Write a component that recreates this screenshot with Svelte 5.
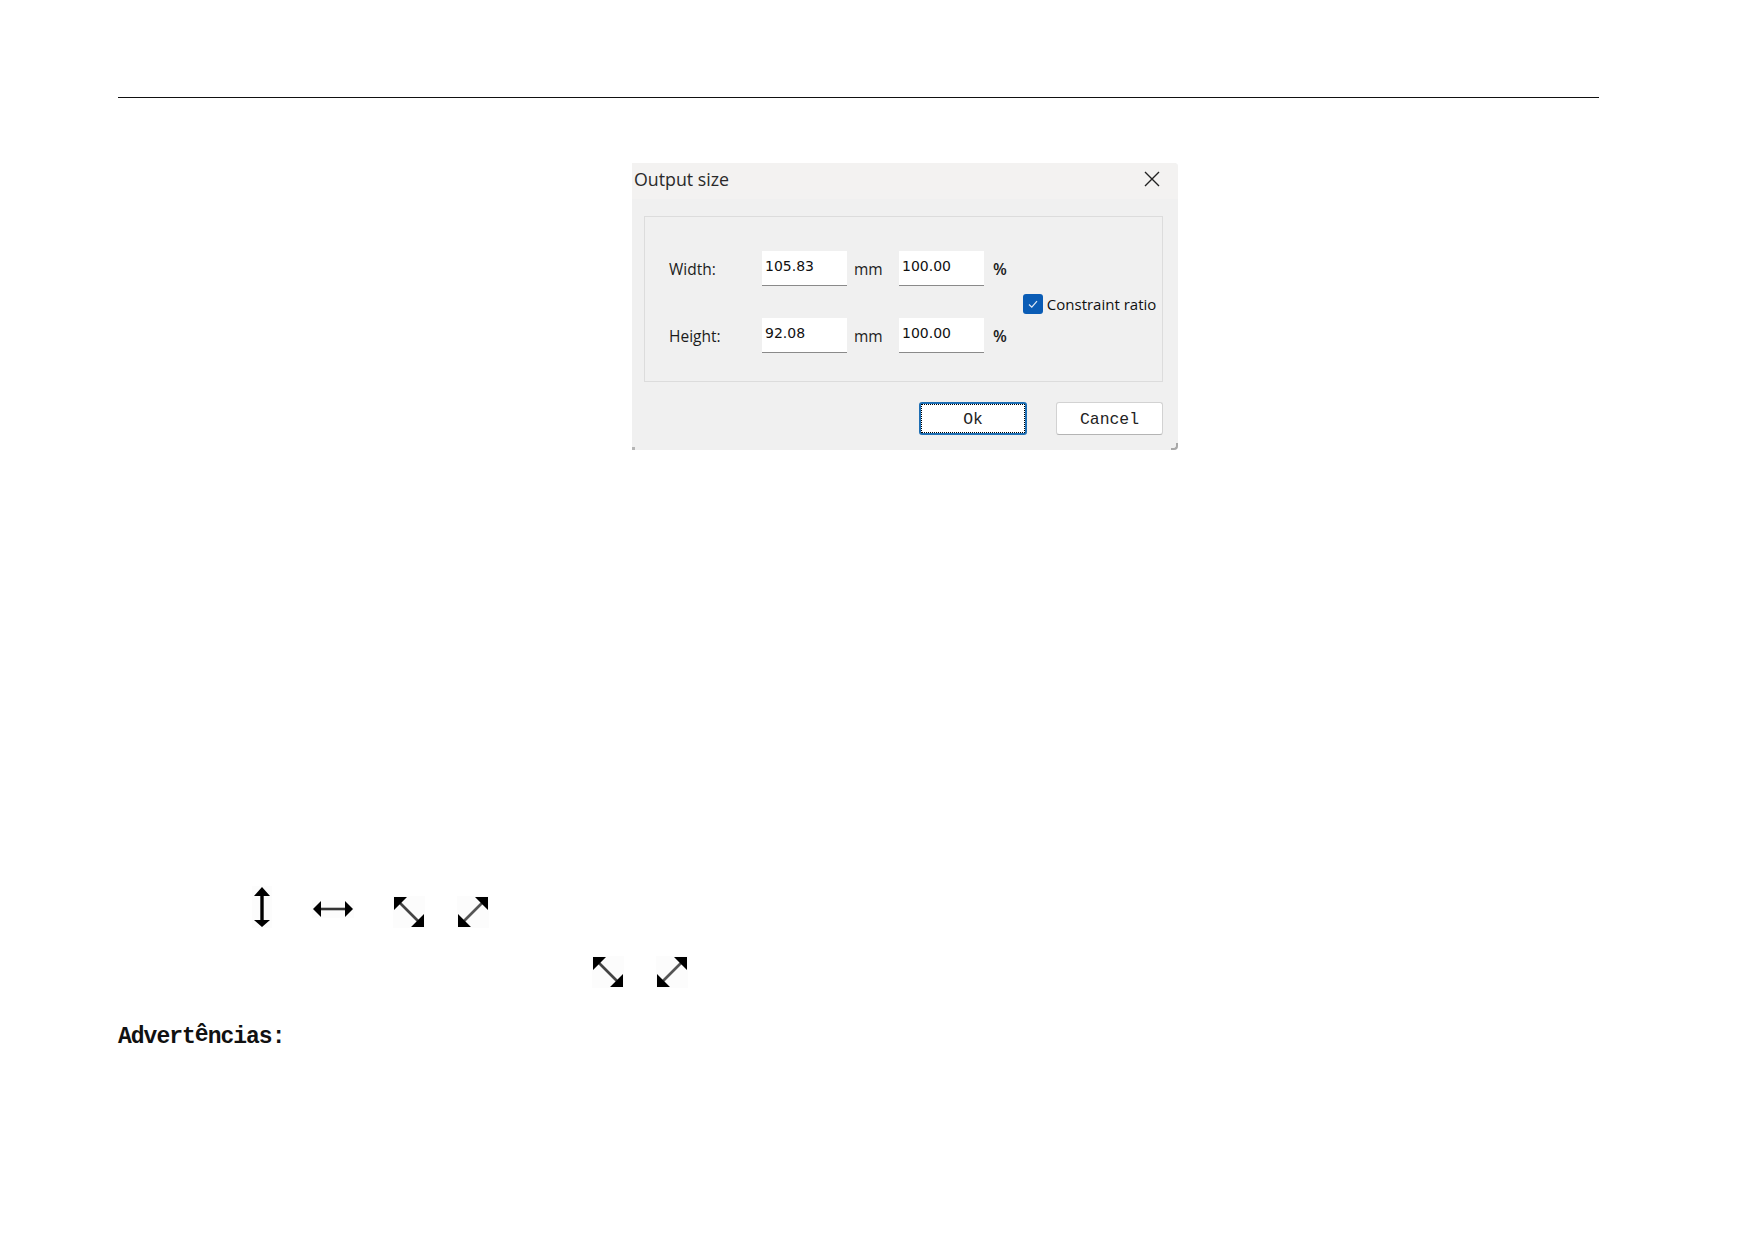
<script lang="ts">
  // Output size dialog plus the resize cursors shown under it
  const rows = [
    { label: 'Width:', mm: '105.83', pct: '100.00' },
    { label: 'Height:', mm: '92.08', pct: '100.00' }
  ];
</script>

{#snippet vert()}
  <svg class="cursor" width="20" height="42" viewBox="0 0 20 42">
    <path d="M10 4v34" stroke="#000" stroke-width="3.4" fill="none"/>
    <path d="M10 1l8 9H2zM10 41l8-7H2z" fill="#000"/>
  </svg>
{/snippet}

{#snippet horiz()}
  <svg class="cursor" width="42" height="18" viewBox="0 0 42 18">
    <path d="M5 9h32" stroke="#333" stroke-width="2.6" fill="none"/>
    <path d="M1 9l8-8v16zM41 9l-8-8v16z" fill="#000"/>
  </svg>
{/snippet}

{#snippet nwse()}
  <svg class="cursor" width="32" height="32" viewBox="0 0 32 32">
    <path d="M6 6l20 20" stroke="#444" stroke-width="2.6" fill="none"/>
    <path d="M1 1h13L1 14zM31 31H18l13-13z" fill="#000"/>
  </svg>
{/snippet}

{#snippet nesw()}
  <svg class="cursor" width="32" height="32" viewBox="0 0 32 32">
    <path d="M26 6L6 26" stroke="#555" stroke-width="2.6" fill="none"/>
    <path d="M31 1H18l13 13zM1 31h13L1 18z" fill="#000"/>
  </svg>
{/snippet}

<div class="page">
  <hr class="rule" />

  <section class="dialog">
    <header class="titlebar">
      <span class="title">Output size</span>
      <svg class="close" width="16" height="16" viewBox="0 0 16 16">
        <path d="M1 1l14 14M15 1L1 15" stroke="#222" stroke-width="1.4" fill="none"/>
      </svg>
    </header>

    <div class="panel">
      <div class="fields">
        {#each rows as row}
          <div class="row">
            <span class="label">{row.label}</span>
            <span class="input">{row.mm}</span>
            <span class="unit mm">mm</span>
            <span class="input">{row.pct}</span>
            <span class="unit pct">%</span>
          </div>
        {/each}
      </div>
      <div class="constraint">
        <span class="check">
          <svg width="12" height="12" viewBox="0 0 12 12">
            <path d="M2 6.5l2.8 2.6L10 3.2" stroke="#dfeaf6" stroke-width="1.2" fill="none"/>
          </svg>
        </span>
        <span class="constraint-label">Constraint ratio</span>
      </div>
    </div>

    <div class="actions">
      <button class="btn primary"><span class="focus">Ok</span></button>
      <button class="btn">Cancel</button>
    </div>
  </section>

  <div class="cursors first">
    <span class="slot">{@render vert()}</span>
    <span class="slot h">{@render horiz()}</span>
    <span class="slot d1">{@render nwse()}</span>
    <span class="slot d2">{@render nesw()}</span>
  </div>
  <div class="cursors second">
    {@render nwse()}
    {@render nesw()}
  </div>

  <h2 class="warn">Advert<span class="accent">ê</span>ncias:</h2>
</div>

<style>
  :global(body) {
    margin: 0;
    background: #fff;
  }

  .page {
    box-sizing: border-box;
    width: 1754px;
    height: 1240px;
    padding: 97px 155px 0 118px;
    overflow: hidden;
  }

  .rule {
    margin: 0;
    border: none;
    border-top: 1px solid #111;
  }

  .dialog {
    box-sizing: border-box;
    position: relative;
    width: 546px;
    height: 287px;
    margin: 65px 0 0 514px;
    background: #f0f0f0;
    border-radius: 0 4px 4px 0;
    font-family: "Open Sans", sans-serif;
    color: #222;
  }

  /* the grey nicks left on the window corners */
  .dialog::before,
  .dialog::after {
    content: "";
    position: absolute;
    bottom: 0;
    width: 5px;
    height: 5px;
  }

  .dialog::before {
    left: 0;
    width: 3px;
    height: 3px;
    background: #b5b5b5;
  }

  .dialog::after {
    right: 0;
    border-right: 2px solid #a8a8a8;
    border-bottom: 2px solid #a8a8a8;
    border-bottom-right-radius: 4px;
  }

  .titlebar {
    display: flex;
    align-items: center;
    justify-content: space-between;
    height: 36px;
    padding: 0 18px 5px 2px;
    box-sizing: border-box;
    background: #f3f2f1;
    border-top-right-radius: 4px;
  }

  .title {
    font-size: 17.8px;
    color: #2a2a2a;
  }

  .panel {
    box-sizing: border-box;
    display: flex;
    margin: 17px 15px 0 12px;
    height: 166px;
    border: 1px solid #dcdcdc;
    padding: 34px 0 0 24px;
  }

  .fields {
    display: flex;
    flex-direction: column;
    gap: 32px;
  }

  .row {
    display: flex;
    align-items: center;
    height: 35px;
  }

  .label {
    width: 93px;
    font-size: 15.5px;
    color: #1c1c1c;
  }

  .input {
    box-sizing: border-box;
    width: 85px;
    height: 35px;
    padding: 6px 0 0 3px;
    background: #fff;
    border-bottom: 1px solid #8a8a8a;
    font: 14px/18px "DejaVu Sans", sans-serif;
    color: #111;
  }

  .unit {
    font-size: 15.5px;
    color: #1c1c1c;
  }

  .mm {
    box-sizing: border-box;
    width: 52px;
    padding-left: 7px;
  }

  .pct {
    padding-left: 9px;
    font-size: 16px;
    font-weight: 600;
  }

  .constraint {
    display: flex;
    align-items: center;
    gap: 4px;
    margin: 43px 0 0 16px;
    height: 20px;
    white-space: nowrap;
  }

  .check {
    display: flex;
    align-items: center;
    justify-content: center;
    width: 20px;
    height: 20px;
    border-radius: 3px;
    background: #0a5cb5;
  }

  .constraint-label {
    font-size: 15px;
    color: #111;
  }

  .actions {
    display: flex;
    justify-content: flex-end;
    gap: 29px;
    margin: 20px 15px 0 0;
  }

  .btn {
    box-sizing: border-box;
    width: 107px;
    height: 33px;
    padding: 2px 0 0;
    background: #fff;
    border: 1px solid #d2d2d2;
    border-bottom-color: #b4b4b4;
    border-radius: 3px;
    font: 16.4px "Liberation Mono", monospace;
    color: #222;
  }

  .primary {
    width: 108px;
    padding: 0;
    border: 2px solid #1f6fb4;
  }

  .focus {
    display: flex;
    align-items: center;
    justify-content: center;
    height: 100%;
    padding-top: 2px;
    box-sizing: border-box;
    border: 1px dotted #000;
  }

  .cursors {
    display: flex;
    align-items: flex-end;
  }

  .slot {
    display: block;
    flex: none;
  }

  .h {
    margin: 0 0 10px 40px;
  }

  .d1 {
    margin-left: 39px;
  }

  .d2 {
    margin-left: 32px;
  }

  .cursor {
    display: block;
    flex: none;
    background: #fcfcfc;
  }

  .first {
    margin: 434px 0 0 134px;
    height: 44px;
  }

  .second {
    margin: 28px 0 0 474px;
    height: 32px;
    gap: 32px;
  }

  .warn {
    margin: 37px 0 0;
    font: bold 23px/25px "Liberation Mono", monospace;
    letter-spacing: -1px;
    color: #111;
  }

  .accent {
    position: relative;
    top: -2px;
  }
</style>
